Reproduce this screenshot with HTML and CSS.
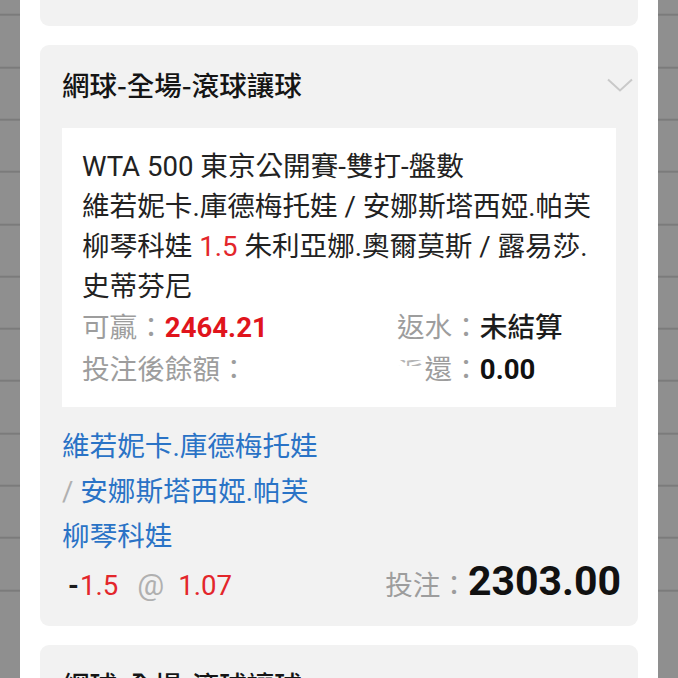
FILE: index.html
```html
<!DOCTYPE html>
<html lang="zh-Hant">
<head>
<meta charset="utf-8">
<link rel="stylesheet" href="styles.css">
</head>
<body>
<div class="backdrop">
  <div class="panel">
    <div class="card-tail"></div>
    <section class="card">
      <div class="card-head">
        <h2 class="card-title">網球-全場-滾球讓球</h2>
        <svg class="chevron" width="26" height="14" viewBox="0 0 26 14"><path d="M1 1.5 L13 12.5 L25 1.5" fill="none" stroke="#c9c9c9" stroke-width="2"/></svg>
      </div>
      <div class="detail">
        <p class="line">WTA 500 東京公開賽-雙打-盤數</p>
        <p class="line">維若妮卡.庫德梅托娃 / 安娜斯塔西婭.帕芙</p>
        <p class="line">柳琴科娃 <span class="red">1.5</span> 朱利亞娜.奧爾莫斯 / 露易莎.</p>
        <p class="line">史蒂芬尼</p>
        <div class="stats">
          <div class="stat"><span class="label">可贏：</span><span class="val red-bold">2464.21</span></div>
          <div class="stat"><span class="label">返水：</span><span class="val dark">未結算</span></div>
          <div class="stat"><span class="label">投注後餘額：</span></div>
          <div class="stat"><span class="label"><span class="clip">派</span>還：</span><span class="val bold">0.00</span></div>
        </div>
      </div>
      <div class="pick">
        <p class="blue">維若妮卡.庫德梅托娃</p>
        <p class="blue"><span class="slash">/</span> 安娜斯塔西婭.帕芙</p>
        <p class="blue">柳琴科娃</p>
        <div class="bet-row">
          <div class="odds"><span class="minus">-</span><span class="red">1.5</span><span class="at">@</span><span class="red">1.07</span></div>
          <div class="stake"><span class="label">投注：</span><span class="amount">2303.00</span></div>
        </div>
      </div>
    </section>
    <section class="card">
      <div class="card-head">
        <h2 class="card-title">網球-全場-滾球讓球</h2>
      </div>
    </section>
  </div>
</div>
</body>
</html>
```
FILE: styles.css
```css
* { box-sizing: border-box; }
html, body { margin: 0; padding: 0; }
body {
  width: 678px;
  height: 678px;
  overflow: hidden;
  font-family: Roboto, "Noto Sans CJK TC", sans-serif;
}
.backdrop {
  height: 678px;
  padding: 0 20px;
  background: repeating-linear-gradient(to bottom, #8f8f8f 0, #8f8f8f 50.3px, #7b7b7b 50.3px, #7b7b7b 52.3px);
  background-position: 0 -36.3px;
}
.panel {
  height: 678px;
  background: #fff;
  padding: 0 20px;
  display: flex;
  flex-direction: column;
  gap: 19px;
  overflow: hidden;
}
.card-tail {
  height: 26px;
  flex: none;
  background: #f2f2f2;
  border-radius: 0 0 9px 9px;
}
.card {
  flex: none;
  background: #f2f2f2;
  border-radius: 9px;
  padding: 18px 0 23px;
}
.card-head {
  display: flex;
  justify-content: space-between;
  align-items: center;
  padding: 0 5px 0 22px;
}
.card-title {
  margin: 0;
  font-family: "Noto Sans CJK TC", sans-serif;
  font-size: 27.5px;
  font-weight: 500;
  line-height: 42px;
  color: #151515;
}
.chevron { display: block; margin-top: 2px; }
.detail {
  margin: 23px 22px 0;
  background: #fff;
  padding: 19px 20px 18px;
}
.line {
  margin: 0;
  font-size: 27.6px;
  line-height: 40px;
  color: #222;
  white-space: nowrap;
}
.red { color: #e3262b; }
.stats {
  display: grid;
  grid-template-columns: 315px 1fr;
  row-gap: 4px;
  padding-top: 2px;
}
.stat {
  font-size: 27.6px;
  line-height: 38px;
  white-space: nowrap;
}
.label { color: #9d9d9d; }
.clip {
  display: inline-block;
  height: 6px;
  overflow: hidden;
  vertical-align: top;
  margin-top: 9px;
  line-height: 24px;
  color: #b5b5b5;
}
.val.red-bold { color: #e0141c; font-weight: 700; }
.val.dark { color: #1c1c1c; font-weight: 500; }
.val.bold { color: #111; font-weight: 700; }
.pick {
  margin: 17px 22px 0;
}
.blue {
  margin: 0;
  font-size: 27.6px;
  line-height: 45px;
  color: #2a73c6;
  white-space: nowrap;
}
.slash { color: #b0b0b0; }
.bet-row {
  display: flex;
  justify-content: space-between;
  align-items: baseline;
  margin-right: -5px;
  height: 44px;
  line-height: 44px;
}
.odds {
  font-size: 27.6px;
  padding-left: 6px;
  color: #1c1c1c;
}
.minus { color: #1c1c1c; font-weight: 700; margin-right: 1px; }
.at { color: #b0b0b0; font-size: 30px; margin: 0 14px 0 19px; }
.stake .label { font-size: 27.6px; }
.amount {
  font-size: 41px;
  font-weight: 700;
  color: #111;
}
```
